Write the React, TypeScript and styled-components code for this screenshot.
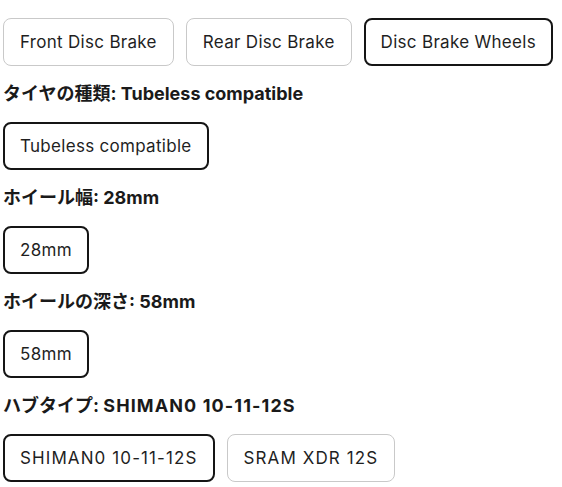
import React from "react";
import styled, { createGlobalStyle } from "styled-components";

const Global = createGlobalStyle`
  html, body { margin: 0; padding: 0; background: #fff; }
  body { font-family: "Inter", "Noto Sans CJK JP", sans-serif; color: #1f1f1f; }
`;

const Page = styled.div`
  padding: 18px 0 0 3px;
  display: flex;
  flex-direction: column;
`;

const Row = styled.div`
  display: flex;
  gap: 12px;
`;

const Option = styled.button<{ $selected?: boolean }>`
  height: 48px;
  box-sizing: border-box;
  padding: 0 ${(p) => (p.$selected ? 15 : 16)}px;
  border-radius: 8px;
  background: #fff;
  font-family: inherit;
  font-size: 17px;
  font-weight: 400;
  letter-spacing: 0.3px;
  color: #1f1f1f;
  border: ${(p) => (p.$selected ? "2px solid #151515" : "1px solid #c9c9c9")};
  cursor: pointer;
`;

const Text = styled.span<{ $caps?: boolean }>`
  letter-spacing: ${(p) => (p.$caps ? "1.1px" : "inherit")};
`;

const Label = styled.div`
  margin: 16px 0;
  line-height: 24px;
  font-size: 18px;
  font-weight: 700;
  color: #1a1a1a;
`;

const isCaps = (s: string) => s === s.toUpperCase() && /[A-Z]{3}/.test(s);

const groups: { label?: string; value?: string; options: { t: string; s?: boolean }[] }[] = [
  { options: [{ t: "Front Disc Brake" }, { t: "Rear Disc Brake" }, { t: "Disc Brake Wheels", s: true }] },
  { label: "タイヤの種類", value: "Tubeless compatible", options: [{ t: "Tubeless compatible", s: true }] },
  { label: "ホイール幅", value: "28mm", options: [{ t: "28mm", s: true }] },
  { label: "ホイールの深さ", value: "58mm", options: [{ t: "58mm", s: true }] },
  { label: "ハブタイプ", value: "SHIMAN0 10-11-12S", options: [{ t: "SHIMAN0 10-11-12S", s: true }, { t: "SRAM XDR 12S" }] },
];

export default function App() {
  return (
    <Page>
      <Global />
      {groups.map((g, i) => (
        <React.Fragment key={i}>
          {g.label && g.value && (
            <Label>
              {g.label}: <Text $caps={isCaps(g.value)}>{g.value}</Text>
            </Label>
          )}
          <Row>
            {g.options.map((o) => (
              <Option key={o.t} $selected={o.s}>
                <Text $caps={isCaps(o.t)}>{o.t}</Text>
              </Option>
            ))}
          </Row>
        </React.Fragment>
      ))}
    </Page>
  );
}
